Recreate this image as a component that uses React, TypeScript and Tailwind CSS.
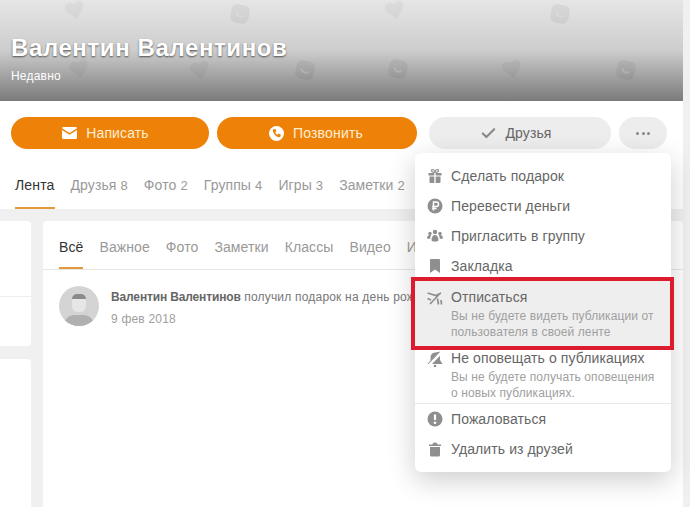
import { Check } from "lucide-react";

const font = { fontFamily: '"Liberation Sans", Arial, sans-serif' };

const profileTabs = [
  { label: "Друзья", count: 8 },
  { label: "Фото", count: 2 },
  { label: "Группы", count: 4 },
  { label: "Игры", count: 3 },
  { label: "Заметки", count: 2 },
];

const feedTabs = ["Важное", "Фото", "Заметки", "Классы", "Видео", "Игры"];

function Heart({ className }: { className: string }) {
  return (
    <svg viewBox="0 0 24 24" className={`absolute h-[22px] w-[22px] -rotate-12 fill-black/[.04] ${className}`}>
      <path d="M12 22 3 12C0 8 2 3 7 3c2 0 4 1 5 3 1-2 3-3 5-3 5 0 7 5 4 9z" />
    </svg>
  );
}

function Smile({ className }: { className: string }) {
  return (
    <svg viewBox="0 0 24 24" className={`absolute h-[22px] w-[22px] rotate-12 ${className}`}>
      <rect x="2" y="2" width="20" height="20" rx="6" className="fill-black/[.05]" />
      <path d="M8 11a4.500 4.500 0 0 0 8 2" fill="none" stroke="white" strokeOpacity=".18" strokeWidth="2" />
    </svg>
  );
}

const iconCls = "h-4 w-4 fill-[#8f8f8f]";

function GiftIcon() {
  return (
    <svg viewBox="0 0 16 16" className={iconCls}>
      <path d="M1.500 5H7.300V7.500H1.500ZM8.700 5H14.500V7.500H8.700ZM2.500 8.500H7.300V15H3.500a1 1 0 0 1-1-1ZM8.700 8.500H13.500V14a1 1 0 0 1-1 1H8.700Z" />
      <path d="M8 4.500C6 4.500 4.500 3.800 4.500 2.600 4.500 1 7 1 8 3.500 9 1 11.500 1 11.500 2.600 11.500 3.800 10 4.500 8 4.500Z" fill="none" stroke="#8f8f8f" strokeWidth="1.200" />
    </svg>
  );
}

function RubleIcon() {
  return (
    <svg viewBox="0 0 16 16" className="h-4 w-4">
      <circle cx="8" cy="8" r="7.500" fill="#8f8f8f" />
      <path d="M6.500 12.500V4h2.800a2.200 2.200 0 0 1 0 4.500H5M5 10.500h4.500" fill="none" stroke="white" strokeWidth="1.500" />
    </svg>
  );
}

function GroupIcon() {
  return (
    <svg viewBox="0 0 16 16" className={iconCls}>
      <circle cx="8" cy="4" r="2.200" />
      <circle cx="3" cy="5.500" r="1.700" />
      <circle cx="13" cy="5.500" r="1.700" />
      <path d="M4.500 12c0-3 1.500-5 3.500-5s3.500 2 3.500 5c0 1-1.500 1.500-3.500 1.500S4.500 13 4.500 12ZM0 10c0-1.500 1.200-3 2.800-3 .6 0 1 .1 1.300.3-.6 1-.9 2.200-.9 3.500-1.700 0-3.200-.1-3.200-.8ZM16 10c0-1.500-1.200-3-2.800-3-.6 0-1 .1-1.300.3.600 1 .9 2.200.9 3.500 1.700 0 3.200-.1 3.200-.8Z" />
    </svg>
  );
}

function BookmarkIcon() {
  return (
    <svg viewBox="0 0 16 16" className={iconCls}>
      <path d="M3 2a1 1 0 0 1 1-1h8a1 1 0 0 1 1 1v13l-5-3.500L3 15Z" />
    </svg>
  );
}

function UnsubIcon() {
  return (
    <svg viewBox="0 0 16 16" className="h-4 w-4" fill="none" stroke="#8f8f8f" strokeWidth="1.700">
      <path d="M.5 3 9 5.500 14 3M3 14 13 3.500M.5 8.500 4 10M10.500 8.500 11.500 14.500M14 10l.5 4.500" />
    </svg>
  );
}

function BellOffIcon() {
  return (
    <svg viewBox="0 0 16 16" className={iconCls}>
      <path d="M.5 13 3.500 9.500V6.500C3.500 4 5 2.300 7 1.800L13.500.5 1.500 13ZM5 13 13 4.800V9l2.500 4Z" />
      <circle cx="8" cy="15" r="1.300" />
    </svg>
  );
}

function AlertIcon() {
  return (
    <svg viewBox="0 0 16 16" className="h-4 w-4">
      <circle cx="8" cy="8" r="7.500" fill="#8f8f8f" />
      <path d="M8 3.500v5.500" stroke="white" strokeWidth="2.200" />
      <circle cx="8" cy="11.800" r="1.300" fill="white" />
    </svg>
  );
}

function TrashIcon() {
  return (
    <svg viewBox="0 0 16 16" className={iconCls}>
      <path d="M2 3.500h12V5H2ZM5.500 3.500c0-1.200 1-2 2.500-2s2.500.8 2.500 2ZM3 6h10v8a1.500 1.500 0 0 1-1.500 1.500h-7A1.500 1.500 0 0 1 3 14Z" />
    </svg>
  );
}

function MenuRow({ icon, label }: { icon: React.ReactNode; label: string }) {
  return (
    <div className="flex h-[30px] items-center pl-[12px] text-[14px] tracking-[0.1px] text-[#666]">
      <span className="mr-[8px] flex w-[16px] justify-center">{icon}</span>
      {label}
    </div>
  );
}

function MenuNote({ icon, label, note }: { icon: React.ReactNode; label: string; note: string }) {
  return (
    <div className="flex pl-[12px] text-[#666]">
      <span className="mr-[8px] mt-[3px] flex w-[16px] justify-center">{icon}</span>
      <div className="w-[210px]">
        <div className="text-[14px] leading-[20px] tracking-[0.1px]">{label}</div>
        <div className="mt-px text-[12px] leading-[16px] tracking-[0.1px] text-[#a0a0a0]">{note}</div>
      </div>
    </div>
  );
}

export default function App() {
  return (
    <div className="relative h-[507px] w-[690px] overflow-hidden bg-[#f0f0f0]" style={font}>
      <div className="mr-[7px] h-[209px] bg-white">
        <div className="relative h-[101px] overflow-hidden bg-gradient-to-b from-[#e6e6e6] via-[#cdcdcd] to-[#7b7b7b] pl-[11px] pt-[34px]">
          <Heart className="left-[64px] top-[-1px]" />
          <Smile className="left-[229px] top-[3px]" />
          <Heart className="left-[384px] top-[-1px]" />
          <Smile className="left-[549px] top-[3px]" />
          <Heart className="left-[68px] top-[58px]" />
          <Heart className="left-[189px] top-[59px]" />
          <Smile className="left-[294px] top-[59px]" />
          <Smile className="left-[387px] top-[58px]" />
          <Heart className="left-[501px] top-[58px]" />
          <Smile className="left-[615px] top-[59px]" />
          <h1 className="relative text-[24px] font-bold leading-[28px] tracking-[0.6px] text-white [text-shadow:0_1px_2px_rgba(0,0,0,0.6)]">
            Валентин Валентинов
          </h1>
          <p className="relative mt-[7px] text-[12px] leading-[14px] tracking-[0.2px] text-white">Недавно</p>
        </div>
        <div className="flex gap-[8px] pl-[11px] pt-[16px]">
          <button className="flex h-[32px] w-[198px] items-center justify-center gap-[9px] rounded-full bg-[#ee8208] pr-[9px] text-[14px] tracking-[0.1px] text-[#ffeed4]">
            <svg viewBox="0 0 15 12" className="h-[12px] w-[15px] fill-white">
              <path d="M1.500 0h12A1.500 1.500 0 0 1 15 1.200L7.500 6 0 1.200A1.500 1.500 0 0 1 1.500 0ZM0 3l7.500 4.800L15 3v7.500a1.500 1.500 0 0 1-1.500 1.500h-12A1.500 1.500 0 0 1 0 10.500Z" />
            </svg>
            Написать
          </button>
          <button className="flex h-[32px] w-[200px] items-center justify-center gap-[9px] rounded-full bg-[#ee8208] pr-[2px] text-[14px] tracking-[0.2px] text-[#ffeed4]">
            <svg viewBox="0 0 16 16" className="h-[15px] w-[15px]">
              <circle cx="8" cy="8" r="8" fill="white" />
              <path d="M5 3.500 6.800 3l1 2.800-1.200 1c.4 1 1.300 1.900 2.300 2.400l1.100-1.100 2.700 1.100-.5 1.800c-.3.800-1.200 1.100-2 .9C7.500 11.200 4.800 8.500 4.200 5.500 4 4.700 4.300 3.900 5 3.500Z" fill="#ee8208" />
            </svg>
            Позвонить
          </button>
          <button className="ml-[4px] flex h-[32px] w-[182px] items-center justify-center gap-[8px] rounded-full bg-[#ededed] pr-[8px] text-[14px] tracking-[0.1px] text-[#666]">
            <Check className="h-[17px] w-[17px] text-[#8a8a8a]" strokeWidth={3} />
            Друзья
          </button>
          <button className="flex h-[32px] w-[48px] items-center justify-center gap-[2.500px] rounded-full bg-[#ededed]">
            <span className="h-[3px] w-[3px] rounded-full bg-[#888]" />
            <span className="h-[3px] w-[3px] rounded-full bg-[#888]" />
            <span className="h-[3px] w-[3px] rounded-full bg-[#888]" />
          </button>
        </div>
        <div className="flex h-[60px] items-stretch gap-[16px] pl-[15px] pt-[12px] text-[14px] tracking-[0.1px] text-[#999]">
          <div className="border-b-2 border-[#e39a3a] pt-[14px] tracking-[0.15px] text-[#333]">Лента</div>
          {profileTabs.map((tab) => (
            <div key={tab.label} className="pt-[14px]">
              {tab.label} <span className="text-[13px]">{tab.count}</span>
            </div>
          ))}
        </div>
      </div>

      <div className="mt-[12px] flex gap-[12px]">
        <div className="flex w-[31px] flex-col gap-[13px]">
          <div className="h-[125px] rounded-r-[4px] bg-white">
            <div className="h-[76px] border-b border-[#eee]" />
          </div>
          <div className="h-[200px] rounded-tr-[4px] bg-white" />
        </div>
        <div className="h-[300px] w-[640px] rounded-t-[4px] bg-white">
          <div className="flex h-[49px] gap-[16px] border-b border-[#e6e6e6] pl-[16px] text-[14px] tracking-[0.1px] text-[#999]">
            <div className="h-[48px] border-b-2 border-[#e39a3a] pt-[16px] text-[#333]">Всё</div>
            {feedTabs.map((tab) => (
              <div key={tab} className="pt-[16px]">{tab}</div>
            ))}
          </div>
          <div className="flex pl-[16px] pt-[16px]">
            <div className="relative h-[40px] w-[40px] overflow-hidden rounded-full bg-[#d4d4d4]">
              <div className="absolute left-[13px] top-[9px] h-[17px] w-[14px] rounded-[6px] bg-[#e6e6e6]" />
              <div className="absolute left-[13px] top-[8px] h-[5px] w-[14px] rounded-t-[5px] bg-[#8a8a8a]" />
              <div className="absolute left-[5px] top-[29px] h-[16px] w-[30px] rounded-t-[10px] bg-[#b0b0b0]" />
            </div>
            <div className="ml-[12px] whitespace-nowrap text-[12px] tracking-[0.2px] text-[#777]">
              <p className="pt-[3px] leading-[16px]">
                <b className="tracking-[-0.15px] text-[#666]">Валентин Валентинов</b> получил подарок на день рождения
              </p>
              <p className="mt-[6px] leading-[16px] text-[#a0a0a0]">9 фев 2018</p>
            </div>
          </div>
        </div>
      </div>

      <div className="absolute left-[415px] top-[153px] h-[319px] w-[256px] rounded-[6px] bg-white pt-[8px] shadow-[0_8px_28px_rgba(0,0,0,0.2)]">
        <MenuRow icon={<GiftIcon />} label="Сделать подарок" />
        <MenuRow icon={<RubleIcon />} label="Перевести деньги" />
        <MenuRow icon={<GroupIcon />} label="Пригласить в группу" />
        <MenuRow icon={<BookmarkIcon />} label="Закладка" />
        <div className="h-[67px] bg-[#eeeeee] pt-[6px]">
          <MenuNote
            icon={<UnsubIcon />}
            label="Отписаться"
            note="Вы не будете видеть публикации от пользователя в своей ленте"
          />
        </div>
        <div className="h-[56px] border-b border-[#e8e8e8]">
          <MenuNote
            icon={<BellOffIcon />}
            label="Не оповещать о публикациях"
            note="Вы не будете получать оповещения о новых публикациях."
          />
        </div>
        <MenuRow icon={<AlertIcon />} label="Пожаловаться" />
        <MenuRow icon={<TrashIcon />} label="Удалить из друзей" />
      </div>

      <div className="absolute left-[411px] top-[277px] h-[73px] w-[263px] border-[4px] border-[#dc1c2e]" />
    </div>
  );
}
